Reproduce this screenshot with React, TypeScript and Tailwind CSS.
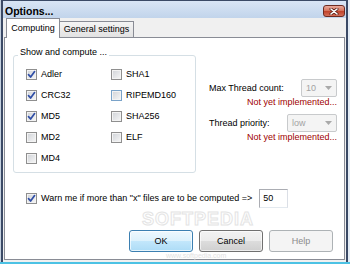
import React from "react";

// Options dialog (Vista look) — onglet "Computing".

type Check = { label: string; checked?: boolean; hot?: boolean };

const LEFT: Check[] = [
  { label: "Adler", checked: true },
  { label: "CRC32", checked: true },
  { label: "MD5", checked: true },
  { label: "MD2" },
  { label: "MD4" },
];

const RIGHT: Check[] = [
  { label: "SHA1" },
  { label: "RIPEMD160", hot: true },
  { label: "SHA256" },
  { label: "ELF" },
];

function Box({ checked, hot }: { checked?: boolean; hot?: boolean }) {
  return (
    <span
      className={`flex h-[11px] w-[11px] shrink-0 items-center justify-center border bg-[linear-gradient(135deg,#cfd2d7,#f7f7f7)] shadow-[inset_0_0_0_1px_#f3f3f3] ${
        hot ? "border-[#7aa3c9]" : "border-[#8f8f8f]"
      }`}
    >
      {checked && (
        <svg width="9" height="9" viewBox="0 0 9 9" fill="none">
          <path
            d="M1.5 4.6 L3.6 7 L7.6 1.6"
            stroke="#2f4ea6"
            strokeWidth="1.7"
            strokeLinecap="round"
            strokeLinejoin="round"
          />
        </svg>
      )}
    </span>
  );
}

function CheckRow({ c }: { c: Check }) {
  return (
    <div className="flex h-[21px] items-center gap-[4px]">
      <Box checked={c.checked} hot={c.hot} />
      <span>{c.label}</span>
    </div>
  );
}

function Combo({ value, width }: { value: string; width: string }) {
  return (
    <div
      className={`flex h-[18px] ${width} items-center justify-between rounded-[2px] border border-[#c8cacc] bg-[#f4f4f4] pl-[4px] pr-[4px] text-[#a3a3a3]`}
    >
      <span>{value}</span>
      <svg width="7" height="4" viewBox="0 0 7 4">
        <path d="M0 0 H7 L3.5 4 Z" fill="#a9a9a9" />
      </svg>
    </div>
  );
}

export default function App() {
  return (
    <div className="relative flex h-[264px] w-[350px] flex-col overflow-hidden bg-[#f0f0f0] font-['Liberation_Sans',Arial,sans-serif] text-[9px] leading-[11px] text-black">
      <div className="flex min-h-0 flex-1 border-l border-r-2 border-l-[#c5d1df] border-r-[#e4ecf5]">
        <div className="flex min-w-0 flex-1 flex-col border-x-2 border-t border-[#3b4a66]">
          {/* barre de titre */}
          <div className="flex h-[17px] shrink-0 items-center justify-between bg-[linear-gradient(#d9e5f5,#c1d4eb)] pl-[2px] pr-px pt-[3px]">
            <span className="text-[10.5px] font-bold leading-[12px]">Options...</span>
            <div className="flex h-[12px] w-[22px] items-center justify-center rounded-[3px] border border-[#6d2b21] bg-[linear-gradient(#eaaa9c,#d6765f_45%,#c2452d_55%,#d26e58)]">
              <svg width="10" height="7" viewBox="0 0 10 7">
                <path d="M2 1 L8 6 M8 1 L2 6" stroke="#5a2018" strokeWidth="3" strokeLinecap="round" />
                <path d="M2 1 L8 6 M8 1 L2 6" stroke="#ffffff" strokeWidth="1.6" strokeLinecap="round" />
              </svg>
            </div>
          </div>

          {/* onglets */}
          <div className="flex h-[19px] shrink-0 items-end pl-[3px]">
            <div className="relative z-10 -mb-px flex h-[20px] w-[54px] items-center justify-center border border-b-0 border-[#898c95] bg-white">
              Computing
            </div>
            <div className="flex h-[16px] w-[74px] items-center justify-center border border-b-0 border-l-0 border-[#898c95] bg-[linear-gradient(#f4f4f4,#e2e2e2)]">
              General settings
            </div>
          </div>

          {/* panneau */}
          <div className="ml-px flex h-[223px] w-[341px] shrink-0 flex-col border border-[#898c95] bg-white">
            <div className="flex items-start pl-[8px] pt-[17px]">
              <div className="relative h-[118px] w-[183px] shrink-0 rounded-[3px] border border-[#d5dfe5]">
                <span className="absolute -top-[9px] left-[4px] bg-white px-[2px]">
                  Show and compute ...
                </span>
                <div className="flex pl-[12px] pt-[8px]">
                  <div className="w-[85px]">
                    {LEFT.map((c) => (
                      <CheckRow key={c.label} c={c} />
                    ))}
                  </div>
                  <div>
                    {RIGHT.map((c) => (
                      <CheckRow key={c.label} c={c} />
                    ))}
                  </div>
                </div>
              </div>

              <div className="ml-[13px] mt-[24px] flex w-[128px] flex-col">
                <div className="flex h-[18px] items-center justify-between">
                  <span>Max Thread count:</span>
                  <Combo value="10" width="w-[36px]" />
                </div>
                <div className="text-right text-[#a00000]">Not yet implemented...</div>
                <div className="mt-[6px] flex h-[18px] items-center justify-between">
                  <span>Thread priority:</span>
                  <Combo value="low" width="w-[50px]" />
                </div>
                <div className="text-right text-[#a00000]">Not yet implemented...</div>
              </div>
            </div>

            <div className="mt-[16px] flex h-[19px] items-center pl-[21px]">
              <Box checked />
              <span className="ml-[4px]">{'Warn me if more than "x" files are to be computed =>'}</span>
              <div className="ml-[7px] flex h-[19px] w-[29px] items-center border border-[#abadb3] border-b-[#e3e9ef] border-r-[#dbdfe6] bg-white pl-[3px]">
                50
              </div>
            </div>

            <div className="mt-[22px] flex justify-end gap-[6px] pr-[11px]">
              <button
                type="button"
                className="h-[22px] w-[64px] rounded-[3px] border border-[#3c7fb1] bg-[linear-gradient(#eef8fe,#dcf1fc_50%,#c3e7fb_50%,#addcf6)] shadow-[inset_0_0_0_1px_#ffffffb0]"
              >
                OK
              </button>
              <button
                type="button"
                className="h-[22px] w-[64px] rounded-[3px] border border-[#707070] bg-[linear-gradient(#f2f2f2,#ebebeb_50%,#dddddd_50%,#cfcfcf)] shadow-[inset_0_0_0_1px_#ffffffa0]"
              >
                Cancel
              </button>
              <button
                type="button"
                className="h-[22px] w-[64px] rounded-[3px] border border-[#adb2b5] bg-[#f4f4f4] text-[#8b8b8b]"
              >
                Help
              </button>
            </div>
          </div>
        </div>
      </div>
      <div className="h-[2px] shrink-0 bg-[#4cc2e4]" />

      {/* filigrane, placé hors des libellés */}
      <div className="pointer-events-none absolute left-[142px] top-[210px] text-[18px] font-bold leading-[18px] tracking-[1px] text-transparent [-webkit-text-stroke:1px_#e4e4e4]">
        SOFTPEDIA
      </div>
      <div className="pointer-events-none absolute left-[166px] top-[252px] text-[7px] leading-[8px] text-[#e2e2e2]">
        www.softpedia.com
      </div>
    </div>
  );
}
